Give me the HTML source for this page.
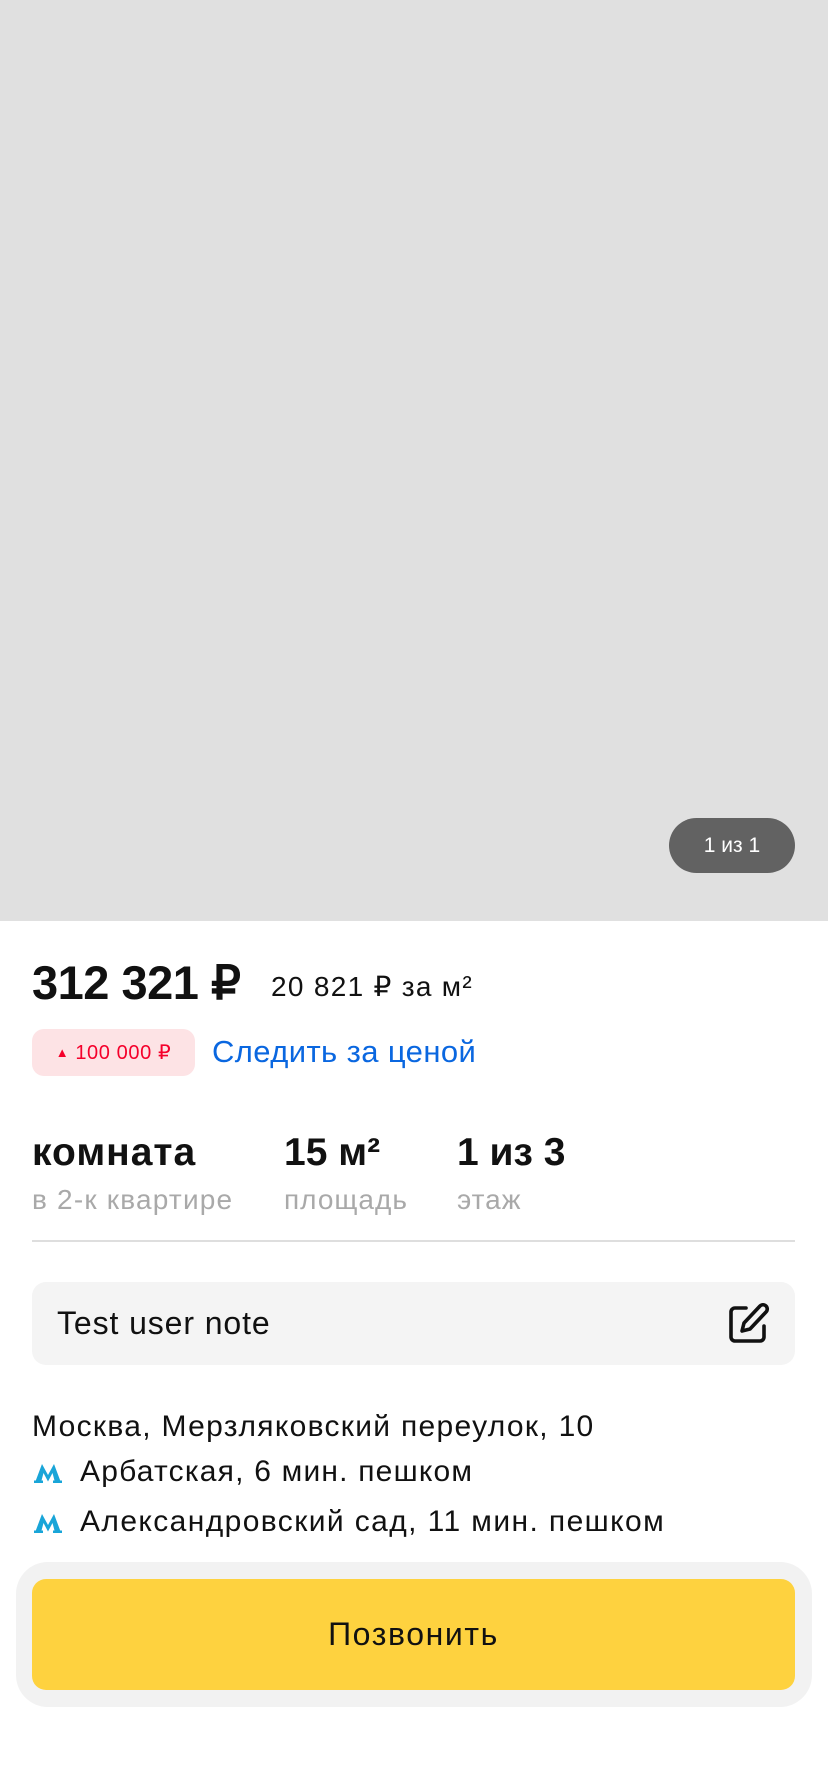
<!DOCTYPE html>
<html><head><meta charset="utf-8"><style>
*{margin:0;padding:0;box-sizing:border-box}
body{width:828px;height:1792px;background:#fff;font-family:"Liberation Sans","Noto Sans CJK JP",sans-serif;color:#111;position:relative;overflow:hidden}
.a{position:absolute;white-space:nowrap}
</style></head><body>
<div class="a" style="left:0;top:0;width:828px;height:921px;background:#e0e0e0"></div>
<div class="a" style="left:669px;top:818px;width:126px;height:55px;border-radius:28px;background:#626262;color:#fff;font-size:21px;line-height:55px;text-align:center">1 из 1</div>

<div class="a" style="left:32px;top:955px;font-size:47px;font-weight:bold;letter-spacing:-0.5px;line-height:56px">312 321 ₽</div>
<div class="a" style="left:271px;top:969px;font-size:28px;line-height:36px;letter-spacing:1.3px">20 821 ₽ за м²</div>

<div class="a" style="left:32px;top:1029px;width:163px;height:47px;border-radius:12px;background:#fde3e5;color:#f5002b;font-size:20px;line-height:47px;text-align:center;letter-spacing:0.6px"><span style="font-size:13px;vertical-align:2px">▲</span> 100 000 ₽</div>
<div class="a" style="left:212px;top:1033px;font-size:31px;line-height:38px;color:#0a67e0;letter-spacing:0.4px">Следить за ценой</div>

<div class="a" style="left:32px;top:1130px;font-size:39px;font-weight:bold;line-height:46px;letter-spacing:1px">комната</div>
<div class="a" style="left:284px;top:1130px;font-size:39px;font-weight:bold;line-height:46px">15 м²</div>
<div class="a" style="left:457px;top:1130px;font-size:39px;font-weight:bold;line-height:46px">1 из 3</div>
<div class="a" style="left:32px;top:1183px;font-size:28px;color:#a9a9a9;line-height:34px;letter-spacing:1.2px">в 2-к квартире</div>
<div class="a" style="left:284px;top:1183px;font-size:28px;color:#a9a9a9;line-height:34px;letter-spacing:1px">площадь</div>
<div class="a" style="left:457px;top:1183px;font-size:28px;color:#a9a9a9;line-height:34px;letter-spacing:1px">этаж</div>
<div class="a" style="left:32px;top:1240px;width:763px;height:2px;background:#dedede"></div>

<div class="a" style="left:32px;top:1282px;width:763px;height:83px;border-radius:14px;background:#f4f4f4"></div>
<div class="a" style="left:57px;top:1304px;font-size:32px;line-height:38px;letter-spacing:0.9px">Test user note</div>
<svg class="a" style="left:726px;top:1302px" width="44" height="44" viewBox="0 0 44 44" fill="none" stroke="#111" stroke-width="3.6" stroke-linecap="round" stroke-linejoin="round">
<path d="M20 6H9a4 4 0 0 0-4 4v25a4 4 0 0 0 4 4h25a4 4 0 0 0 4-4V24"/>
<path d="M34 4a4.2 4.2 0 0 1 6 6L24 27l-8 2 2-8z"/>
</svg>

<div class="a" style="left:32px;top:1409px;font-size:30px;line-height:36px;letter-spacing:1.3px">Москва, Мерзляковский переулок, 10</div>
<svg class="a" style="left:34px;top:1464px" width="28" height="19" viewBox="0 0 28 19"><path d="M0 19h9v-2.5H7.5L9.5 9 14 17.5 18.5 9l2 7.5H19V19h9v-2.5h-1.8L20 0 14 11 8 0 1.8 16.5H0z" fill="#19a5d8"/></svg>
<div class="a" style="left:80px;top:1454px;font-size:30px;line-height:36px;letter-spacing:1.2px">Арбатская, 6 мин. пешком</div>
<svg class="a" style="left:34px;top:1514px" width="28" height="19" viewBox="0 0 28 19"><path d="M0 19h9v-2.5H7.5L9.5 9 14 17.5 18.5 9l2 7.5H19V19h9v-2.5h-1.8L20 0 14 11 8 0 1.8 16.5H0z" fill="#19a5d8"/></svg>
<div class="a" style="left:80px;top:1504px;font-size:30px;line-height:36px;letter-spacing:1.4px">Александровский сад, 11 мин. пешком</div>

<div class="a" style="left:16px;top:1562px;width:796px;height:145px;border-radius:32px;background:#f2f2f2"></div>
<div class="a" style="left:32px;top:1579px;width:763px;height:111px;border-radius:14px;background:#fed23f;font-size:32px;line-height:111px;text-align:center;letter-spacing:1.6px">Позвонить</div>
</body></html>
